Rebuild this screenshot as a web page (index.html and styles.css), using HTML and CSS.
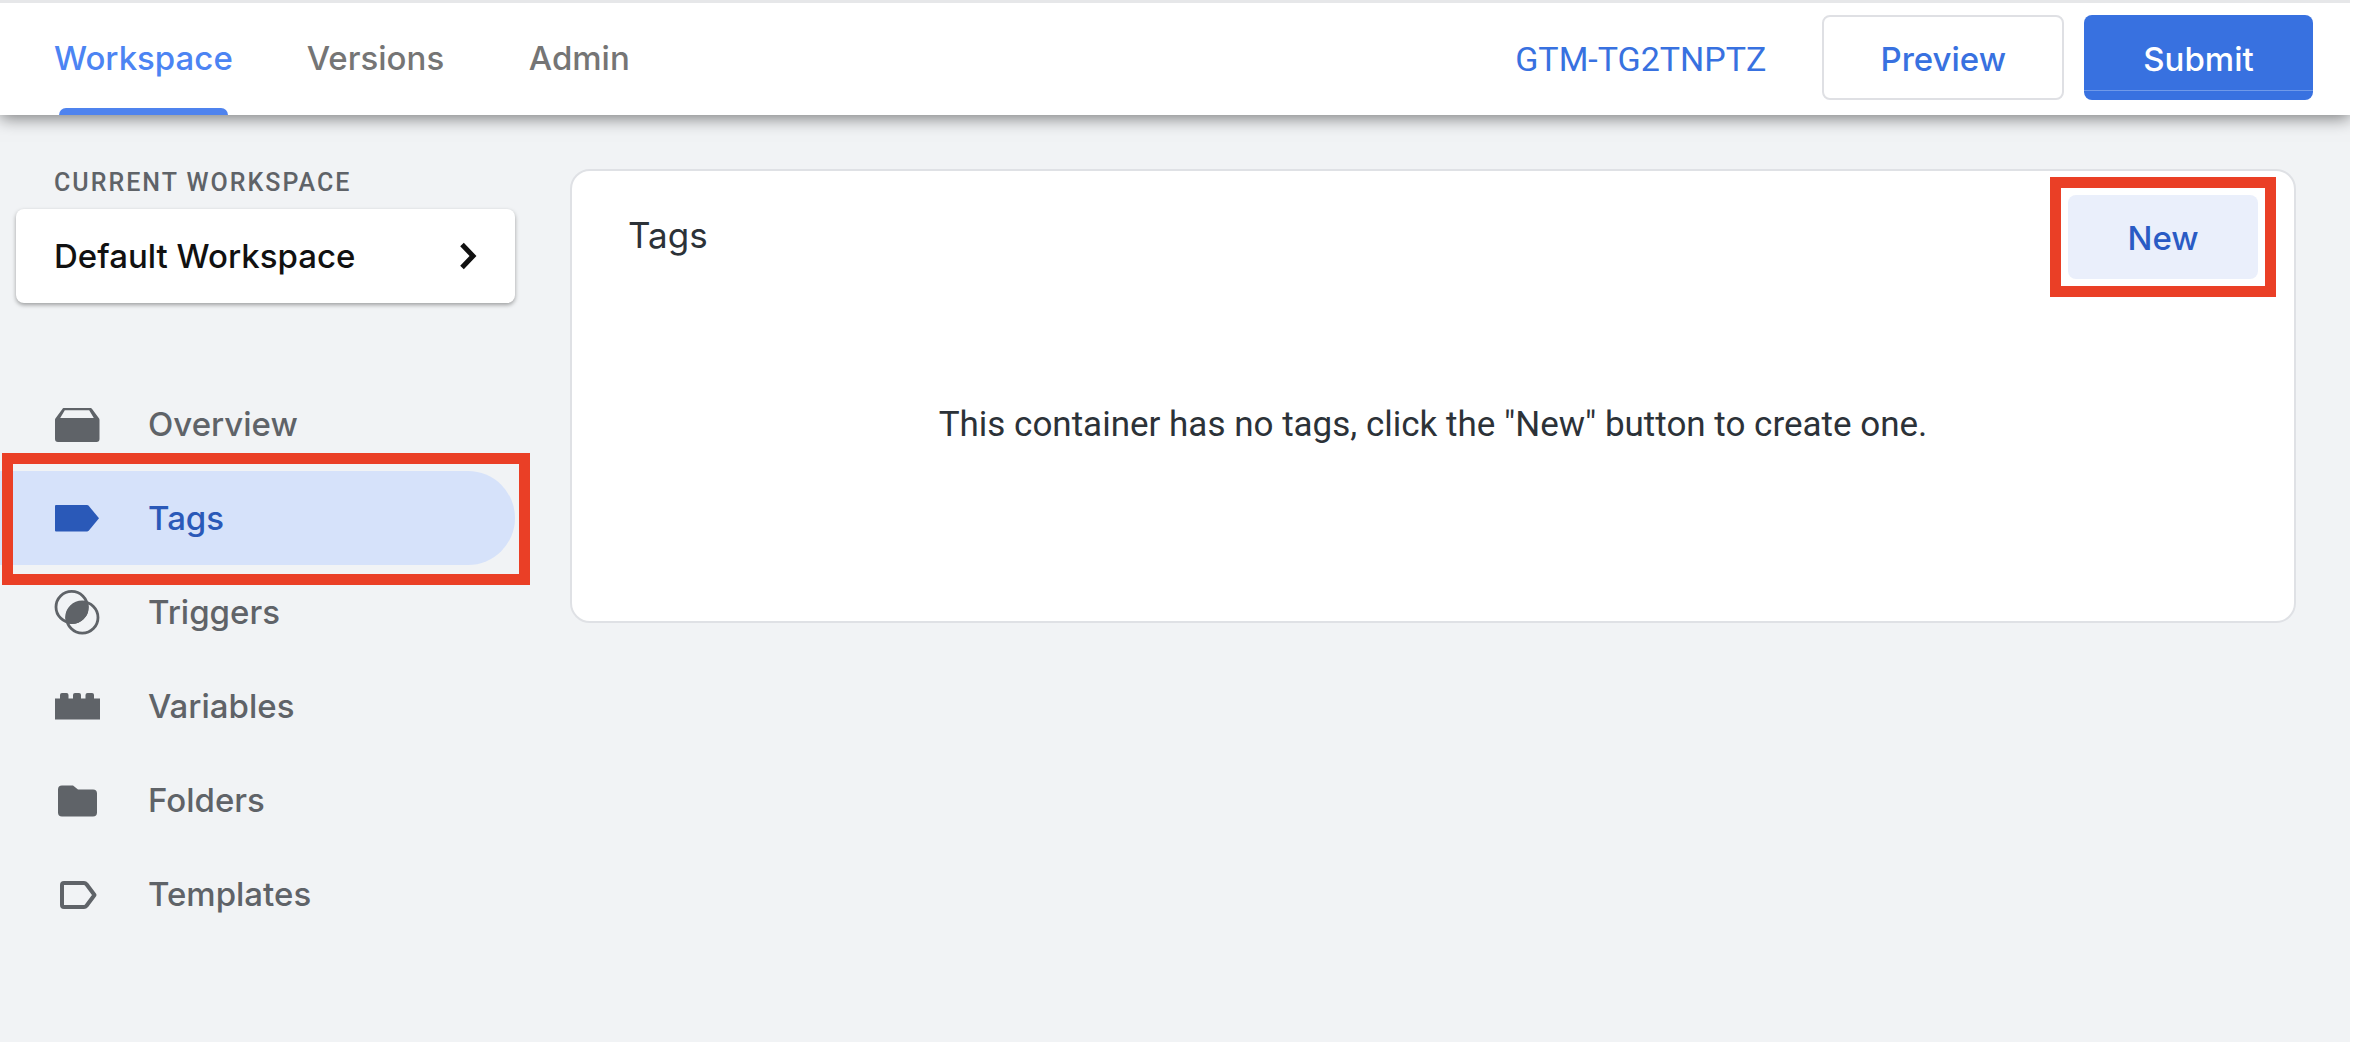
FILE: index.html
```html
<!DOCTYPE html>
<html lang="en">
<head>
<meta charset="utf-8">
<title>Tag Manager - Tags</title>
<link rel="stylesheet" href="styles.css">
</head>
<body>
<header class="topbar">
  <nav class="tabs" aria-label="Sections">
    <a class="tab tab-active" href="#workspace">Workspace</a>
    <a class="tab" href="#versions">Versions</a>
    <a class="tab" href="#admin">Admin</a>
  </nav>
  <div class="actions">
    <a class="container-id" href="#container">GTM-TG2TNPTZ</a>
    <button class="btn btn-outline" type="button">Preview</button>
    <button class="btn btn-primary" type="button">Submit</button>
  </div>
</header>
<div class="layout">
  <aside class="sidebar">
    <h2 class="sidebar-label" id="ws-label">Current Workspace</h2>
    <button class="workspace-picker" type="button" aria-describedby="ws-label">
      <span>Default Workspace</span>
      <svg class="chevron" viewBox="0 0 20 28" aria-hidden="true"><path d="M3 2.500 14 14 3 25.500" fill="none" stroke="currentColor" stroke-width="5"/></svg>
    </button>
    <nav class="menu" aria-label="Workspace">
      <a class="menu-item" href="#overview">
        <svg class="icon" viewBox="0 0 46 46" aria-hidden="true"><path fill="currentColor" fill-rule="evenodd" d="M9.500 7h27q1 0 1.600 1l7 9.500q.4.700.4 1.500v19q0 3-3 3H4q-3 0-3-3V19q0-.8.400-1.500l7-9.500q.5-1 1.100-1zM10.800 9.300 6.200 17h33.600l-4.600-7.700z"/></svg>
        Overview
      </a>
      <a class="menu-item menu-item-active highlight" href="#tags" aria-current="page">
        <svg class="icon" viewBox="0 0 46 46" aria-hidden="true"><path fill="currentColor" d="M2 10h31q1 0 1.700.8L45 23.300 34.700 35.700Q34 36.500 33 36.500H2q-1 0-1-1V11q0-1 1-1z"/></svg>
        Tags
      </a>
      <a class="menu-item" href="#triggers">
        <svg class="icon" viewBox="0 0 46 46" aria-hidden="true"><g fill="none" stroke="currentColor" stroke-width="2.800"><circle cx="17.700" cy="18" r="15.700"/><circle cx="28.300" cy="28.500" r="15.700"/></g><path fill="currentColor" d="M33.500 13.500a16 16 0 0 1-21 20 16 16 0 0 1 21-20z"/></svg>
        Triggers
      </a>
      <a class="menu-item" href="#variables">
        <svg class="icon" viewBox="0 0 46 46" aria-hidden="true"><path fill="currentColor" d="M1 15.500h5v-3.500q0-2 2-2h4.500q2 0 2 2v3.500h4.500v-3.500q0-2 2-2h4q2 0 2 2v3.500h4.500v-3.500q0-2 2-2H38q2 0 2 2v3.500h6v21H1z"/></svg>
        Variables
      </a>
      <a class="menu-item" href="#folders">
        <svg class="icon" viewBox="0 0 46 46" aria-hidden="true"><path fill="currentColor" d="M8 8.500h11l5 4h15q4 0 4 4v19q0 4-4 4H8q-4 0-4-4v-23q0-4 4-4z"/></svg>
        Folders
      </a>
      <a class="menu-item" href="#templates">
        <svg class="icon" viewBox="0 0 46 46" aria-hidden="true"><path fill="none" stroke="currentColor" stroke-width="4" stroke-linejoin="round" d="M10 12h20q1.500 0 2.500 1.200L40.500 24l-8 10.800Q31.500 36 30 36H10q-2 0-2-2V14q0-2 2-2z"/></svg>
        Templates
      </a>
    </nav>
  </aside>
  <main class="content">
    <section class="card">
      <div class="card-head">
        <h1 class="card-title">Tags</h1>
        <button class="btn btn-tonal highlight" type="button">New</button>
      </div>
      <p class="empty">This container has no tags, click the "New" button to create one.</p>
    </section>
  </main>
</div>
</body>
</html>
```

FILE: styles.css
```css
* {
  box-sizing: border-box;
}

body {
  margin: 0;
  min-height: 100vh;
  background: #f1f3f5;
  border-right: 4px solid #fff;
  color: #5f6368;
  font: 500 33px/40px Inter, "Liberation Sans", sans-serif;
}

a {
  color: inherit;
  text-decoration: none;
}

button {
  font: inherit;
}

.topbar {
  position: relative;
  display: flex;
  justify-content: space-between;
  height: 115px;
  padding: 0 37px 0 54px;
  border-top: 3px solid #e6e7e9;
  background: #fff;
  box-shadow: 0 3px 16px rgba(0, 0, 0, 0.5);
}

.tabs {
  display: flex;
  gap: 74px;
}

.tab {
  position: relative;
  min-width: 148px;
  padding-top: 35px;
  color: #757575;
}

.tab-active {
  color: #4c84f3;
}

.tab-active::after {
  content: "";
  position: absolute;
  left: 5px;
  right: 5px;
  bottom: 0;
  height: 7px;
  border-radius: 7px 7px 0 0;
  background: #4f83ee;
}

.actions {
  display: flex;
  align-items: flex-start;
  gap: 20px;
  padding-top: 12px;
}

.container-id {
  margin-right: 36px;
  padding-top: 24px;
  color: #3871e0;
  font-family: Roboto, sans-serif;
  font-weight: 400;
  font-size: 34px;
}

.btn {
  height: 85px;
  padding: 2px 56px 0;
  border: 0;
  border-radius: 8px;
}

.btn-outline {
  border: 2px solid #dfe0e4;
  background: #fff;
  color: #3871e0;
}

.btn-primary {
  min-width: 229px;
  background: linear-gradient(#6f99e9, #6f99e9) 0 75px / 100% 1px no-repeat #3871e0;
  color: #fff;
}

.btn-tonal {
  min-width: 190px;
  height: 84px;
  background: #eaeffb;
  color: #2a5bc4;
}

.layout {
  display: grid;
  grid-template-columns: 515px 1fr;
  gap: 55px;
  padding-right: 54px;
}

.sidebar {
  padding-top: 48px;
}

.sidebar-label {
  margin: 0 0 6px 54px;
  font: 500 25px/40px Roboto, sans-serif;
  letter-spacing: 2px;
  text-transform: uppercase;
}

.workspace-picker {
  display: flex;
  align-items: center;
  justify-content: space-between;
  width: 499px;
  height: 94px;
  margin-left: 16px;
  padding: 0 36px 0 38px;
  border: 0;
  border-radius: 8px;
  background: #fff;
  box-shadow: 0 2px 4px rgba(0, 0, 0, 0.35);
  color: #111;
}

.chevron {
  width: 20px;
  height: 28px;
}

.menu {
  margin-top: 74px;
}

.menu-item {
  display: flex;
  align-items: center;
  gap: 48px;
  height: 94px;
  padding-left: 54px;
}

.icon {
  width: 46px;
  height: 46px;
}

.menu-item-active {
  border-radius: 0 47px 47px 0;
  background: #d6e2fa;
  color: #2a59b8;
}

/* Red callout frame around the element to click */
.highlight {
  position: relative;
}

.highlight::after {
  content: "";
  position: absolute;
  inset: -18px;
  border: 11px solid #ea3f26;
}

.menu-item-active::after {
  inset: -18px -15px -20px 2px;
}

.content {
  padding-top: 54px;
}

.card {
  min-height: 454px;
  padding-top: 24px;
  border: 2px solid #dfe1e5;
  border-radius: 20px;
  background: #fff;
}

.card-head {
  display: flex;
  justify-content: space-between;
  padding: 0 36px 0 56px;
}

.card-title {
  margin: 20px 0 0;
  color: #2c3238;
  font-weight: 400;
  font-size: 35px;
}

.empty {
  margin: 126px 0 0;
  color: #2c3238;
  font: 400 35px/40px Roboto, sans-serif;
  text-align: center;
}
```
